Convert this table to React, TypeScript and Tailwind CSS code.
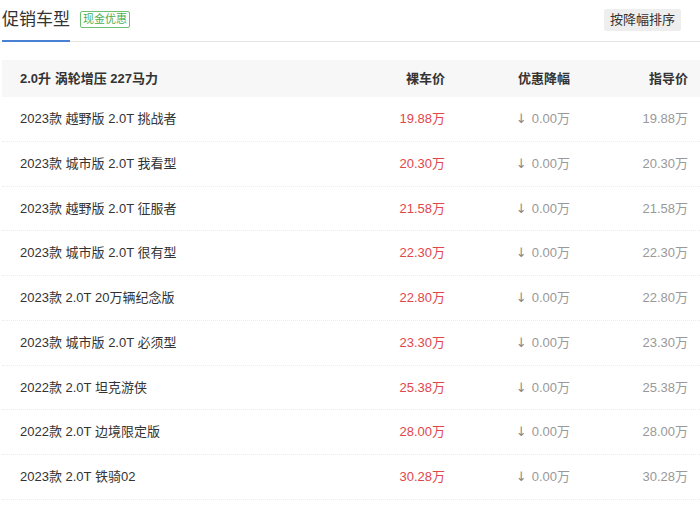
const rows = [
  { name: '2023款 越野版 2.0T 挑战者', price: '19.88万', cut: '0.00万', guide: '19.88万' },
  { name: '2023款 城市版 2.0T 我看型', price: '20.30万', cut: '0.00万', guide: '20.30万' },
  { name: '2023款 越野版 2.0T 征服者', price: '21.58万', cut: '0.00万', guide: '21.58万' },
  { name: '2023款 城市版 2.0T 很有型', price: '22.30万', cut: '0.00万', guide: '22.30万' },
  { name: '2023款 2.0T 20万辆纪念版', price: '22.80万', cut: '0.00万', guide: '22.80万' },
  { name: '2023款 城市版 2.0T 必须型', price: '23.30万', cut: '0.00万', guide: '23.30万' },
  { name: '2022款 2.0T 坦克游侠', price: '25.38万', cut: '0.00万', guide: '25.38万' },
  { name: '2022款 2.0T 边境限定版', price: '28.00万', cut: '0.00万', guide: '28.00万' },
  { name: '2023款 2.0T 铁骑02', price: '30.28万', cut: '0.00万', guide: '30.28万' },
]

export default function App() {
  return (
    <div className="w-[700px] h-[513px] overflow-hidden bg-white pl-[2px] font-['Liberation_Sans','Noto_Sans_CJK_SC',sans-serif] text-[#333]">
      {/* Tabs */}
      <div className="flex items-center h-[42px] border-b border-[#e5e5e5]">
        <div className="relative h-full flex items-center">
          <span className="text-[17px] leading-none text-[#333] pb-[2px]">促销车型</span>
          <div className="absolute left-0 right-0 bottom-[-1px] h-[2px] bg-[#4a80d4]" />
        </div>
        <span className="ml-[10px] mb-[2px] border border-[#6cc070] text-[#4caf50] text-[11px] leading-none px-[2px] py-[2px] rounded-[2px]">
          现金优惠
        </span>
        <div className="ml-auto mr-[19px] mb-[2px] bg-[#eeeeee] text-[13px] text-[#333] px-[6px] h-[22px] flex items-center rounded-[2px]">
          按降幅排序
        </div>
      </div>

      <div className="mt-[18px]">
        <div className="grid grid-cols-[1fr_120px_125px_118px] pr-[12px] items-center h-[37px] bg-[#f7f7f7] text-[13px] font-bold text-[#333]">
          <span className="pl-[18px]">2.0升 涡轮增压 227马力</span>
          <span className="text-right">裸车价</span>
          <span className="text-right">优惠降幅</span>
          <span className="text-right">指导价</span>
        </div>
        {rows.map((r) => (
          <div
            key={r.name}
            className="grid grid-cols-[1fr_120px_125px_118px] pr-[12px] items-center h-[44.75px] border-b border-dotted border-[#ececec] text-[13px]"
          >
            <span className="pl-[18px] text-[#333]">{r.name}</span>
            <span className="text-right text-[#e0474c]">{r.price}</span>
            <span className="text-right text-[#999]">
              <span className="mr-[5px] font-['DejaVu_Sans',sans-serif] text-[13px] text-[#888]">↓</span>
              {r.cut}
            </span>
            <span className="text-right text-[#999]">{r.guide}</span>
          </div>
        ))}
      </div>
    </div>
  )
}
